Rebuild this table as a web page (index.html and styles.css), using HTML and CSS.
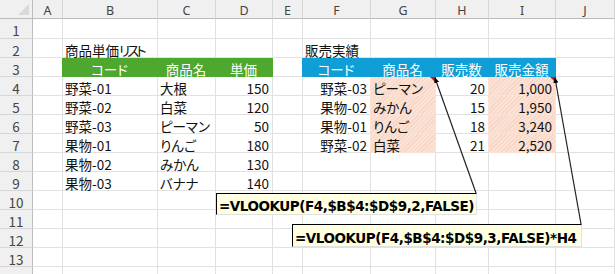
FILE: index.html
```html
<!DOCTYPE html>
<html lang="ja">
<head>
<meta charset="utf-8">
<title>VLOOKUP</title>
<link rel="stylesheet" href="styles.css">
</head>
<body>
<div class="sheet">
  <div class="corner"><span class="tri"></span></div>
  <div class="ch">A</div><div class="ch">B</div><div class="ch">C</div><div class="ch">D</div><div class="ch">E</div><div class="ch">F</div><div class="ch">G</div><div class="ch">H</div><div class="ch">I</div><div class="ch">J</div>

  <div class="rh">1</div><div></div><div></div><div></div><div></div><div></div><div></div><div></div><div></div><div></div><div></div>

  <div class="rh">2</div><div></div><div>商品単価<span class="kana">リスト</span></div><div></div><div></div><div></div><div>販売実績</div><div></div><div></div><div></div><div></div>

  <div class="rh">3</div><div></div><div class="g ctr">コード</div><div class="g ctr">商品名</div><div class="g ctr">単価</div><div></div><div class="b ctr">コード</div><div class="b ctr">商品名</div><div class="b ctr">販売数</div><div class="b ctr">販売金額</div><div></div>

  <div class="rh">4</div><div></div><div>野菜-01</div><div>大根</div><div class="r">150</div><div></div><div class="r">野菜-03</div><div class="p note">ピーマン</div><div class="r">20</div><div class="p r note">1,000</div><div></div>

  <div class="rh">5</div><div></div><div>野菜-02</div><div>白菜</div><div class="r">120</div><div></div><div class="r">果物-02</div><div class="p">みかん</div><div class="r">15</div><div class="p r">1,950</div><div></div>

  <div class="rh">6</div><div></div><div>野菜-03</div><div>ピーマン</div><div class="r">50</div><div></div><div class="r">果物-01</div><div class="p">りんご</div><div class="r">18</div><div class="p r">3,240</div><div></div>

  <div class="rh">7</div><div></div><div>果物-01</div><div>りんご</div><div class="r">180</div><div></div><div class="r">野菜-02</div><div class="p">白菜</div><div class="r">21</div><div class="p r">2,520</div><div></div>

  <div class="rh">8</div><div></div><div>果物-02</div><div>みかん</div><div class="r">130</div><div></div><div></div><div></div><div></div><div></div><div></div>

  <div class="rh">9</div><div></div><div>果物-03</div><div>バナナ</div><div class="r">140</div><div></div><div></div><div></div><div></div><div></div><div></div>

  <div class="rh">10</div><div></div><div></div><div></div><div></div><div></div><div></div><div></div><div></div><div></div><div></div>
  <div class="rh">11</div><div></div><div></div><div></div><div></div><div></div><div></div><div></div><div></div><div></div><div></div>
  <div class="rh">12</div><div></div><div></div><div></div><div></div><div></div><div></div><div></div><div></div><div></div><div></div>
  <div class="rh">13</div><div></div><div></div><div></div><div></div><div></div><div></div><div></div><div></div><div></div><div></div>
  <div class="rh">14</div><div></div><div></div><div></div><div></div><div></div><div></div><div></div><div></div><div></div><div></div>

  <svg class="arrows" width="615" height="274" viewBox="0 0 615 274" xmlns="http://www.w3.org/2000/svg">
    <defs>
      <marker id="ah" markerWidth="6" markerHeight="6" refX="5" refY="3" orient="auto-start-reverse" markerUnits="userSpaceOnUse">
        <path d="M0,0.5 L6,3 L0,5.5 Z" fill="#000"/>
      </marker>
    </defs>
    <line x1="476" y1="193" x2="435" y2="78" stroke="#222" stroke-width="1.2" marker-end="url(#ah)"/>
    <line x1="581" y1="224" x2="555" y2="78" stroke="#222" stroke-width="1.2" marker-end="url(#ah)"/>
  </svg>

  <div class="callout c1">=VLOOKUP(F4,$B$4:$D$9,2,FALSE)</div>
  <div class="callout c2">=VLOOKUP(F4,$B$4:$D$9,3,FALSE)*H4</div>
</div>
</body>
</html>
```
FILE: styles.css
```css
html, body {
  margin: 0;
  padding: 0;
  background: #fff;
}

body {
  width: 615px;
  height: 274px;
  overflow: hidden;
  font-family: "Noto Sans CJK JP", "Noto Sans", sans-serif;
  color: #111;
}

.sheet {
  position: relative;
  display: grid;
  grid-template-columns: 33px 30px 95px 58px 57px 30px 68px 65px 53px 67px 1fr;
  grid-template-rows: 19px 20px repeat(13, 19px);
  width: 615px;
}

.sheet > div {
  box-sizing: border-box;
  border-right: 1px solid #e1e1e1;
  border-bottom: 1px solid #e1e1e1;
  padding: 4px 3px 0 2px;
  font-size: 13.5px;
  line-height: 14px;
  white-space: nowrap;
  font-feature-settings: "palt";
  min-width: 0;
}

.kana {
  letter-spacing: -3px;
}

.sheet > .corner {
  background: #f0f0f0;
  border-right: 1px solid #bcbcbc;
  border-bottom: 1px solid #bcbcbc;
  display: flex;
  justify-content: flex-end;
  align-items: flex-end;
  padding: 0 3px 3px 0;
}

.tri {
  width: 0;
  height: 0;
  border-left: 11px solid transparent;
  border-bottom: 11px solid #d9d9d9;
}

.sheet > .ch {
  background: #f0f0f0;
  border-right: 1px solid #d6d6d6;
  border-bottom: 1px solid #bcbcbc;
  text-align: center;
  font-family: "Noto Sans", "Liberation Sans", sans-serif;
  font-size: 12.5px;
  color: #444;
  padding: 3px 0 0;
  line-height: 15px;
}

.sheet > .rh {
  background: #f0f0f0;
  border-right: 1px solid #bcbcbc;
  border-bottom: 1px solid #d6d6d6;
  text-align: center;
  color: #444;
  padding: 4px 0 0;
  font-size: 13.5px;
}

.sheet > .r { text-align: right; }
.sheet > .ctr { text-align: center; }

.sheet > .g {
  background: #4ea72e;
  border-color: #4ea72e;
  box-shadow: -1px 0 0 #4ea72e;
  color: #fff;
}

.sheet > .b {
  background: #0f9ed5;
  border-color: #0f9ed5;
  box-shadow: -1px 0 0 #0f9ed5;
  color: #fff;
}

.sheet > .p {
  background-color: #fbe2d5;
  background-image: repeating-linear-gradient(135deg, rgba(240, 190, 165, 0.35) 0 1px, transparent 1px 3px);
  border-color: #fbe2d5;
  box-shadow: -1px 0 0 #fbe2d5;
}

.sheet > .note {
  position: relative;
}

.sheet > .note::after {
  content: "";
  position: absolute;
  top: 0;
  right: -1px;
  width: 0;
  height: 0;
  border-top: 6px solid #e81123;
  border-left: 6px solid transparent;
}

.arrows {
  position: absolute;
  left: 0;
  top: 0;
  pointer-events: none;
}

.callout {
  position: absolute;
  box-sizing: border-box;
  display: flex;
  align-items: center;
  background: #ffffe1;
  border: 1px solid #000;
  font-family: "DejaVu Sans", "Liberation Sans", sans-serif;
  font-weight: bold;
  font-size: 12px;
  letter-spacing: -0.45px;
  color: #000;
  white-space: nowrap;
  padding: 0 0 0 6px;
}

.c1 {
  left: 216px;
  top: 193px;
  width: 261px;
  height: 22px;
}

.c2 {
  left: 292px;
  top: 224px;
  width: 290px;
  height: 23px;
}
```
